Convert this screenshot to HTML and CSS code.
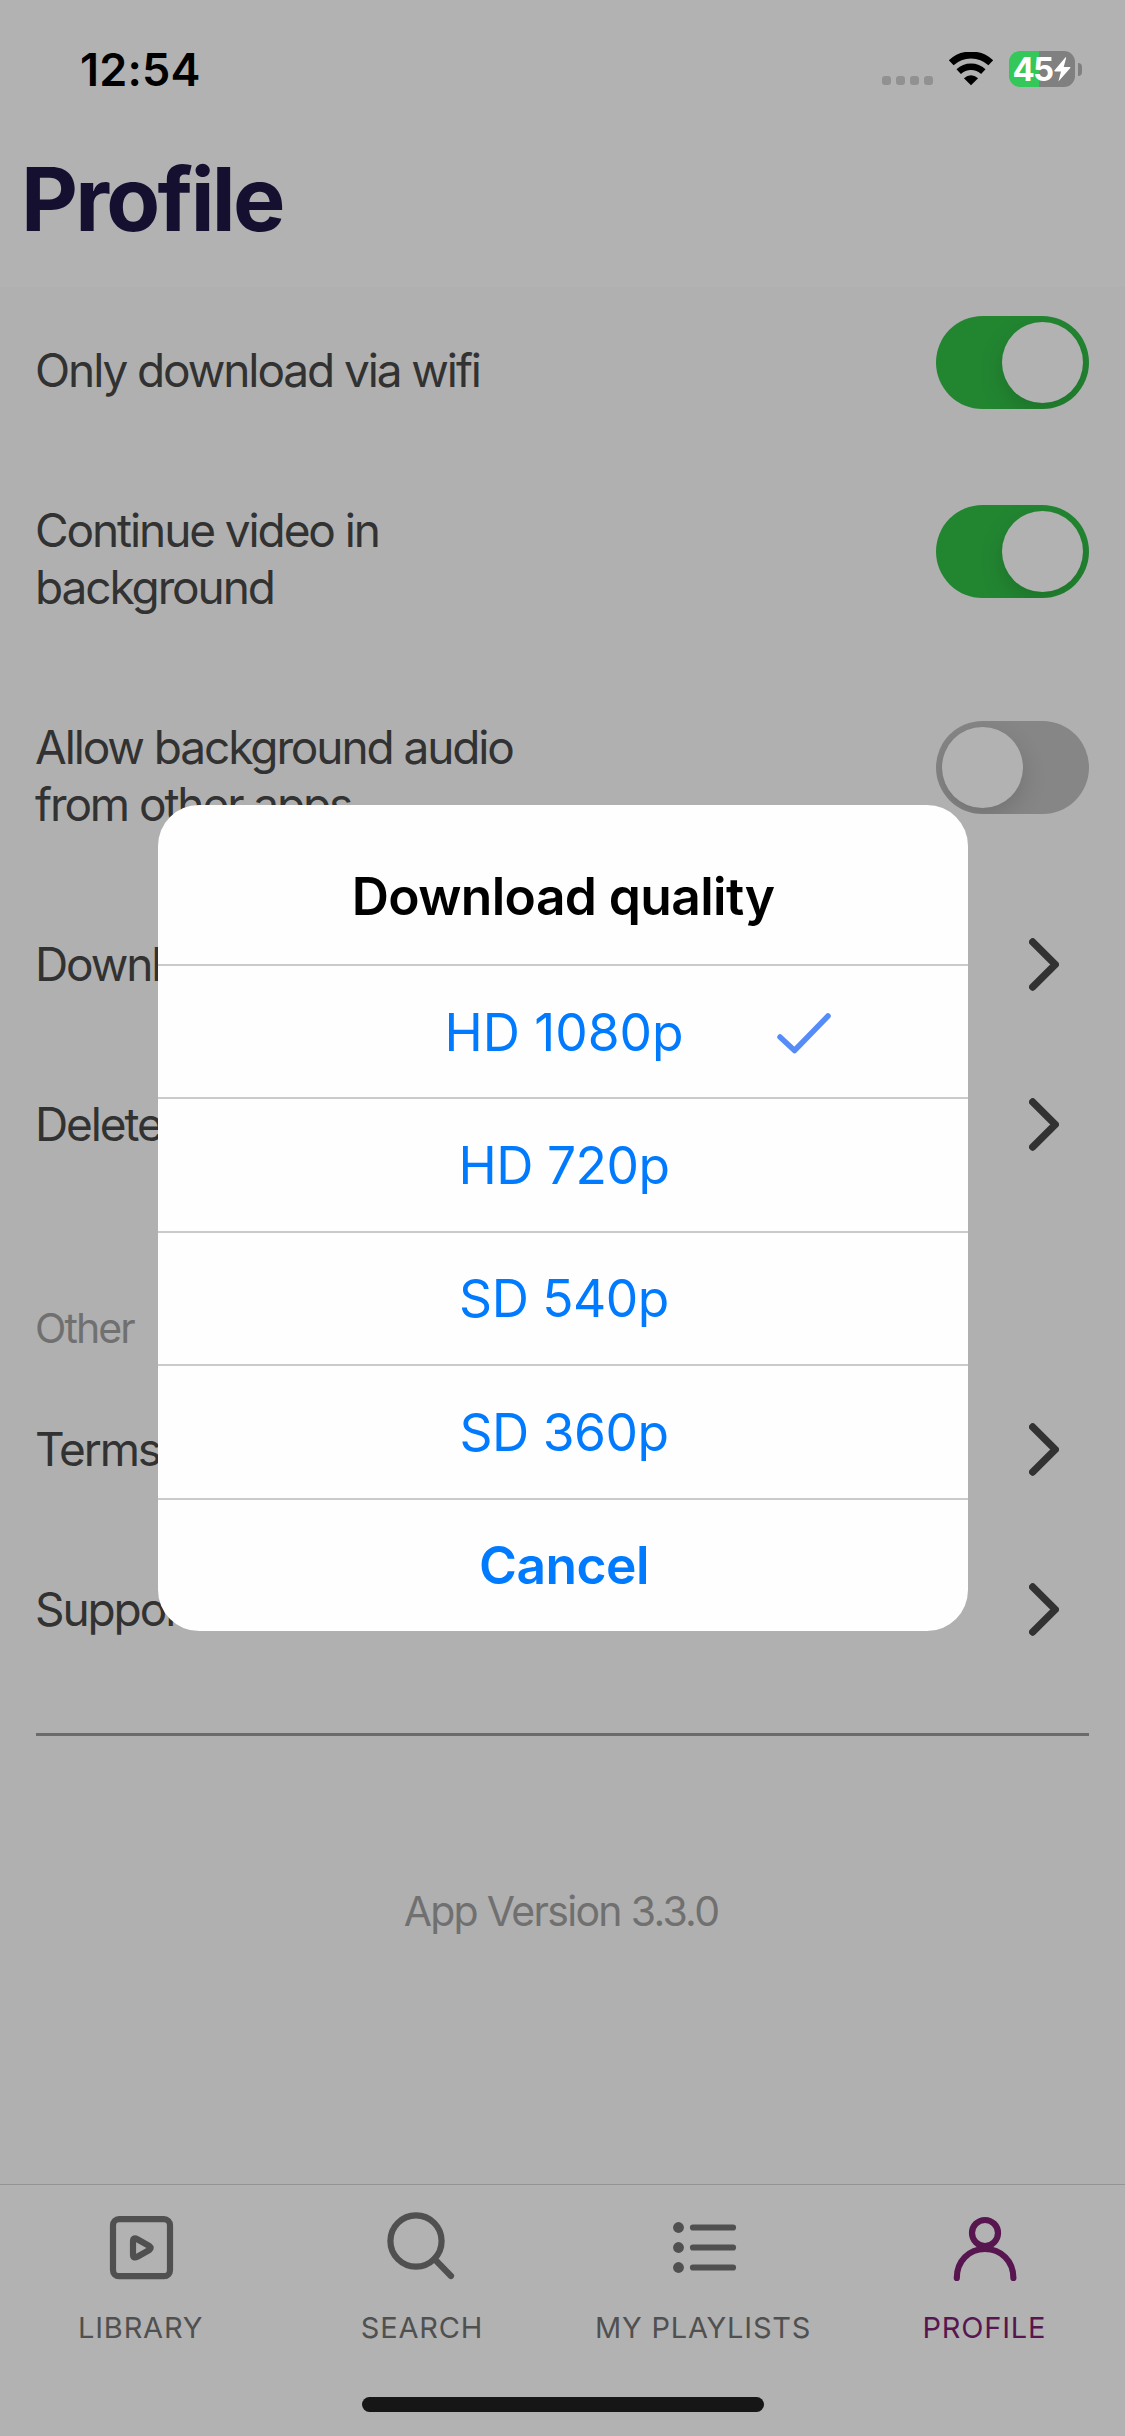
FILE: index.html
```html
<!DOCTYPE html>
<html lang="en">
<head>
<meta charset="utf-8">
<title>Profile</title>
<link rel="stylesheet" href="styles.css">
</head>
<body>
<div class="screen">
  <div class="status">
    <span class="time">12:54</span>
    <div class="status-icons">
      <div class="signal"><i></i><i></i><i></i><i></i></div>
      <svg class="wifi" width="46" height="34" viewBox="0 0 46 34">
        <path d="M3.2 10.8A29 29 0 0 1 42.8 10.8" fill="none" stroke="#000" stroke-width="7"/>
        <path d="M10.7 19.6A18 18 0 0 1 35.3 19.6" fill="none" stroke="#000" stroke-width="6.5"/>
        <path d="M23 33.2L15.9 26.2Q23 20.4 30.1 26.2Z" fill="#000"/>
      </svg>
      <div class="battery">
        <div class="battery-body"><span>45</span>
          <svg width="17" height="25" viewBox="0 0 17 25"><path d="M11.5.3L.4 13.6Q0 14.4 1 14.4H7L4.4 24.4L16.3 11Q16.8 10 15.8 10H9.7L12.2.8Z" fill="#fff"/></svg>
        </div>
        <div class="nub"></div>
      </div>
    </div>
  </div>
  <h1 class="title">Profile</h1>

  <main class="content">
    <div class="row"><span>Only download via wifi</span><div class="toggle on"></div></div>
    <div class="row"><span>Continue video in<br>background</span><div class="toggle on"></div></div>
    <div class="row"><span>Allow background audio<br>from other apps</span><div class="toggle"></div></div>
    <div class="row link"><span>Download quality</span><svg class="chevron" viewBox="0 0 30 53"><path d="M3.7 4L26.3 26.5L3.7 49"/></svg></div>
    <div class="row link"><span>Delete all downloads</span><svg class="chevron" viewBox="0 0 30 53"><path d="M3.7 4L26.3 26.5L3.7 49"/></svg></div>
    <h2 class="section">Other</h2>
    <div class="row link"><span>Terms</span><svg class="chevron" viewBox="0 0 30 53"><path d="M3.7 4L26.3 26.5L3.7 49"/></svg></div>
    <div class="row link"><span>Support</span><svg class="chevron" viewBox="0 0 30 53"><path d="M3.7 4L26.3 26.5L3.7 49"/></svg></div>
    <hr class="divider">
    <p class="version">App Version 3.3.0</p>
  </main>

  <nav class="tabs">
    <div class="tab">
      <svg viewBox="0 0 80 80"><rect x="12" y="12.2" width="57" height="57" rx="6"/><path d="M32 34.5Q32 29.8 36.3 32.3L48.3 39Q51 41 48.3 43L36.3 49.8Q32 52 32 47.5Z"/></svg>
      <span>LIBRARY</span>
    </div>
    <div class="tab">
      <svg viewBox="0 0 80 80"><circle cx="34" cy="34" r="25.6"/><path d="M52.5 52L69 69"/></svg>
      <span>SEARCH</span>
    </div>
    <div class="tab">
      <svg viewBox="0 0 80 80"><path d="M30 20.5H70M30 40.5H70M30 60.5H70"/><g class="dots"><circle cx="15.5" cy="20.5" r="5.4"/><circle cx="15.5" cy="40.5" r="5.4"/><circle cx="15.5" cy="60.5" r="5.4"/></g></svg>
      <span>MY PLAYLISTS</span>
    </div>
    <div class="tab active">
      <svg viewBox="0 0 80 80"><circle cx="41" cy="26" r="13"/><path d="M12.8 71C12.8 54 25 42 41 42S69.4 54 69.4 71"/></svg>
      <span>PROFILE</span>
    </div>
  </nav>
  <div class="home"></div>
</div>

<div class="overlay">
  <div class="dialog">
    <div class="dialog-title">Download quality</div>
    <div class="option"><span class="wide">HD 1080p</span><svg class="check" width="54" height="41" viewBox="0 0 54 41"><path d="M3 24L17.5 37.5L51 3"/></svg></div>
    <div class="option"><span>HD 720p</span></div>
    <div class="option"><span>SD 540p</span></div>
    <div class="option"><span>SD 360p</span></div>
    <div class="option cancel"><span>Cancel</span></div>
  </div>
</div>
</body>
</html>
```
FILE: styles.css
```css
* { box-sizing: border-box; margin: 0; padding: 0; }
body {
  width: 1125px;
  height: 2436px;
  overflow: hidden;
  background: #b2b2b2;
  font-family: Inter, "Liberation Sans", sans-serif;
}
.screen { display: flex; flex-direction: column; height: 2436px; }

.status {
  height: 138px;
  padding: 0 43px 0 80px;
  display: flex;
  align-items: center;
  justify-content: space-between;
}
.time { font-size: 45px; font-weight: 600; letter-spacing: 0.2px; }
.status-icons { display: flex; align-items: center; height: 36px; }
.signal { display: flex; gap: 5px; margin: 23px 15px 0 0; }
.signal i { width: 9px; height: 9px; border-radius: 3px; background: #919191; }
.wifi { margin-right: 15px; }
.battery { display: flex; align-items: center; gap: 3px; }
.battery-body {
  width: 66px;
  height: 36px;
  border-radius: 11px;
  background: linear-gradient(90deg, #34c759 30px, #808080 30px);
  display: flex;
  align-items: center;
  justify-content: center;
  gap: 2px;
  color: #fff;
  font-size: 33px;
  font-weight: 700;
  letter-spacing: -1.8px;
}
.nub { width: 4px; height: 13px; border-radius: 0 6px 6px 0; background: #808080; }

.title {
  height: 149px;
  padding-left: 21px;
  font-size: 88px;
  line-height: 122px;
  font-weight: 700;
  letter-spacing: -2.7px;
  color: #150f30;
}

.content { flex: 1; padding: 4px 36px 0; background: #b0b0b0; }
.row {
  display: flex;
  align-items: center;
  justify-content: space-between;
  padding: 51.4px 0;
  font-size: 46px;
  line-height: 57px;
  letter-spacing: -2.1px;
  color: #323232;
}
.row span { margin-left: -1px; }
.link { height: 160px; padding: 0 30px 0 0; }
.chevron { width: 30px; height: 53px; fill: none; stroke: #323232; stroke-width: 7.4; stroke-linecap: round; stroke-linejoin: round; }

.toggle {
  width: 153px;
  height: 93px;
  margin: -28px 0 -12px;
  padding: 6px;
  border-radius: 47px;
  background: #868686;
  display: flex;
  overflow: hidden;
}
.toggle::before {
  content: "";
  width: 81px;
  height: 81px;
  border-radius: 50%;
  background: #b2b2b2;
  box-shadow: 0 9px 24px rgba(0, 0, 0, 0.15);
}
.toggle.on { background: #228631; justify-content: flex-end; }

.section {
  height: 165px;
  margin-left: -1px;
  padding-top: 96px;
  font-size: 41px;
  line-height: 56px;
  font-weight: 400;
  letter-spacing: -1.9px;
  color: #707070;
}
.divider { height: 3px; margin-top: 44px; border: 0; background: #6b6b6b; }
.version {
  margin-top: 145px;
  padding-right: 3px;
  text-align: center;
  font-size: 41px;
  line-height: 60px;
  letter-spacing: -1.7px;
  color: #707070;
}

.tabs { display: flex; height: 213px; padding-top: 19px; border-top: 1px solid #949494; }
.tab {
  flex: 1;
  display: flex;
  flex-direction: column;
  align-items: center;
  gap: 23px;
  color: #505050;
  font-size: 29px;
  letter-spacing: 0.8px;
}
.tab svg { width: 80px; height: 80px; margin-top: 3px; fill: none; stroke: currentColor; stroke-width: 6.2; stroke-linecap: round; stroke-linejoin: round; }
.tab span { line-height: 36px; }
.tab .dots { fill: currentColor; stroke: none; }
.tab.active { color: #581650; }
.home { width: 402px; height: 15px; margin: 0 auto 24px; border-radius: 8px; background: #161616; }

.overlay {
  position: absolute;
  inset: 0;
  height: 2436px;
  display: flex;
  align-items: center;
  justify-content: center;
}
.dialog {
  width: 810px;
  height: 826px;
  border-radius: 41px;
  background: #fefefe;
  display: grid;
  grid-template-rows: 159px repeat(5, 1fr);
  overflow: hidden;
}
.dialog-title {
  padding: 24px 0 0 1px;
  text-align: center;
  font-size: 51.5px;
  line-height: 134px;
  font-weight: 600;
  letter-spacing: -0.6px;
  color: #000;
}
.option {
  display: grid;
  grid-template-columns: 1fr auto 1fr;
  align-items: center;
  padding-left: 3px;
  border-top: 2px solid #cacaca;
  font-size: 51.5px;
  letter-spacing: -0.5px;
  color: #007aff;
}
.option span { grid-column: 2; }
.option .wide { letter-spacing: 0; }
.check { margin: 3px 0 0 93px; fill: none; stroke: #568cf8; stroke-width: 5.5; stroke-linecap: round; stroke-linejoin: round; }
.cancel { font-weight: 600; }
```
